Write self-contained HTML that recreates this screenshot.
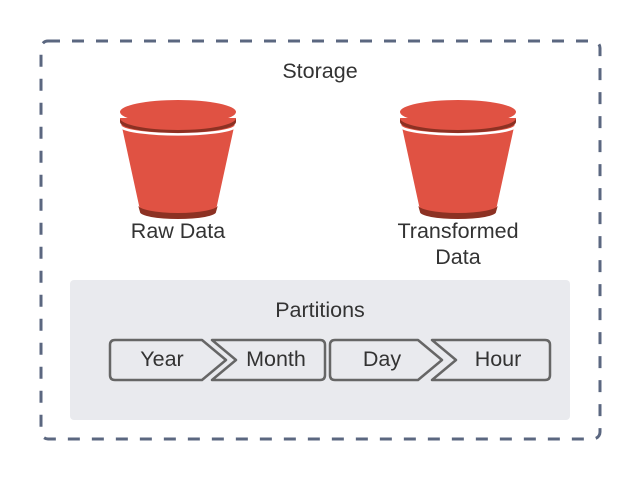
<!DOCTYPE html>
<html><head><style>
body{margin:0;width:640px;height:480px;background:#fff;overflow:hidden}
</style></head><body>
<svg width="640" height="480" xmlns="http://www.w3.org/2000/svg" font-family="Liberation Sans, sans-serif" fill="#333">
<rect x="41" y="41" width="559" height="398" rx="7" fill="none" stroke="#5b6780" stroke-width="3" stroke-dasharray="12 12"/>
<rect x="70" y="280" width="500" height="140" rx="4" fill="#e9eaee"/>
<text x="320" y="78" font-size="21.5" text-anchor="middle" fill="#333">Storage</text>
<g id="b">
<path d="M120 118 L140 210 A38 8 0 0 0 216 210 L236 118 Z" fill="#e05243"/>
<path d="M138 205 A40 8 0 0 0 218 205 L216 212 A38 7 0 0 1 140 212 Z" fill="#8c3123"/>
<path d="M120 118 A58 12 0 0 0 236 118 L236 122 A58 11 0 0 1 120 122 Z" fill="#8c3123"/>
<path d="M121 127 A58 9 0 0 0 235 127" fill="none" stroke="#fff" stroke-width="2.5"/>
<ellipse cx="178" cy="112" rx="58" ry="12" fill="#e05243"/>
</g>
<use href="#b" x="280"/>
<text x="178" y="238" font-size="21.5" text-anchor="middle">Raw Data</text>
<text x="458" y="238" font-size="21.5" text-anchor="middle">Transformed</text>
<text x="458" y="264" font-size="21.5" text-anchor="middle">Data</text>
<text x="320" y="317" font-size="21.5" text-anchor="middle">Partitions</text>
<g fill="#e9eaee" stroke="#666" stroke-width="2.5" stroke-linejoin="round">
<path d="M115 340 H202 L226 360 L202 380 H115 Q110 380 110 375 V345 Q110 340 115 340 Z"/>
<path d="M212 340 H320 Q325 340 325 345 V375 Q325 380 320 380 H212 L236 360 Z"/>
<path d="M335 340 H418 L442 360 L418 380 H335 Q330 380 330 375 V345 Q330 340 335 340 Z"/>
<path d="M432 340 H545 Q550 340 550 345 V375 Q550 380 545 380 H432 L456 360 Z"/>
</g>
<g font-size="21.5" text-anchor="middle">
<text x="162" y="366">Year</text>
<text x="276" y="366">Month</text>
<text x="382" y="366">Day</text>
<text x="498" y="366">Hour</text>
</g>
</svg>
</body></html>
